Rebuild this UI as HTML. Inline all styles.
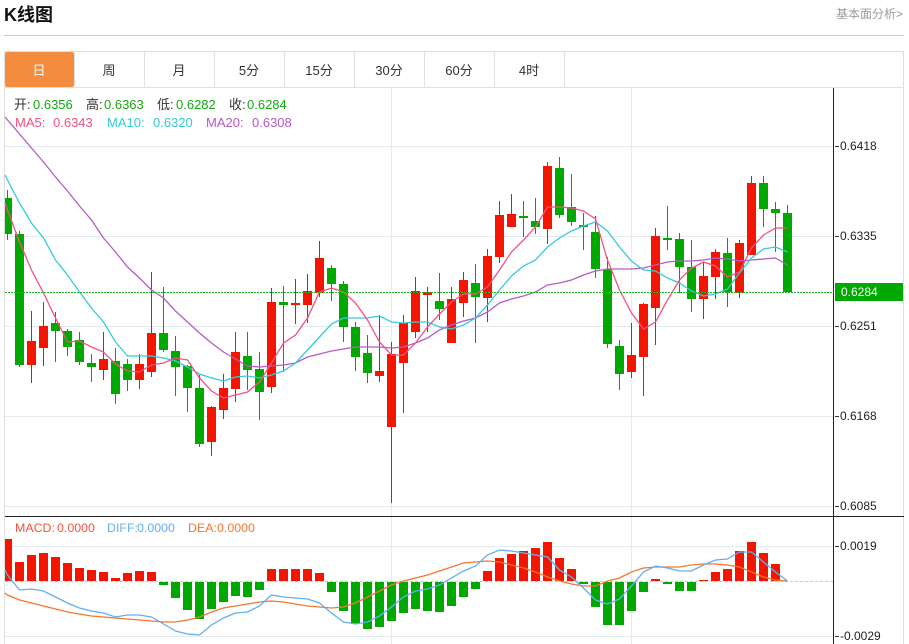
<!DOCTYPE html>
<html><head><meta charset="utf-8"><title>K线图</title>
<style>
html,body{margin:0;padding:0;background:#fff;width:909px;height:644px;overflow:hidden}
svg{display:block;position:absolute;left:0;top:0}
text{font-family:"Liberation Sans","Noto Sans CJK SC",sans-serif}
</style></head><body>
<svg width="909" height="644" viewBox="0 0 909 644" xmlns="http://www.w3.org/2000/svg">
<rect width="909" height="644" fill="#fff"/>
<text x="4" y="21" font-size="18" font-weight="700" fill="#111">K线图</text>
<text x="836" y="18" font-size="12" fill="#9a9a9a">基本面分析&gt;</text>
<path d="M4 35.5H904" stroke="#cccccc" fill="none"/>
<path d="M4.5 644V51.5H903.5V644" stroke="#dedede" fill="none"/>
<path d="M5 87.5H903M74.5 52V87M144.5 52V87M214.5 52V87M284.5 52V87M354.5 52V87M424.5 52V87M494.5 52V87M564.5 52V87" stroke="#e0e0e0" fill="none"/>
<rect x="5" y="52" width="69" height="35" rx="2" fill="#f48c3f"/>
<g font-size="13" fill="#333" text-anchor="middle">
<text x="39" y="75" fill="#fff">日</text><text x="109" y="75">周</text><text x="179" y="75">月</text><text x="249" y="75">5分</text><text x="319" y="75">15分</text><text x="389" y="75">30分</text><text x="459" y="75">60分</text><text x="529" y="75">4时</text>
</g>
<path d="M5 146.5H834M5 236.5H834M5 326.5H834M5 416.5H834M5 506.5H834M5 546.5H834M5 636.5H834M391.5 88V644M631.5 88V644" stroke="#e2ebf2" fill="none"/>
<path d="M5 581.5H834" stroke="#a8d6ea" stroke-dasharray="3 2" fill="none"/>
<!-- candles -->
<path fill="none" stroke="#e8130a" d="M31.5 311V383M43.5 302V366M103.5 332V380M139.5 354V389M151.5 272V377M211.5 406V456M223.5 374V419M235.5 332V402M271.5 288V393M295.5 279V324M307.5 274V323M319.5 241V297M379.5 315V382M391.5 342V503M403.5 315V413M415.5 277V338M427.5 287V332M451.5 287V343M463.5 272V317M487.5 249V322M499.5 201V263M511.5 194V227M547.5 162V244M631.5 323V378M643.5 303V396M655.5 228V345M703.5 262V319M715.5 249V299M739.5 240V298M751.5 176V255"/>
<path fill="#f41500" d="M27 341h9v24h-9zM39 326h9v22h-9zM99 359h9v11h-9zM135 364h9v16h-9zM147 333h9v39h-9zM207 407h9v35h-9zM219 388h9v22h-9zM231 352h9v37h-9zM267 302h9v85h-9zM291 303h9v2h-9zM303 291h9v14h-9zM315 258h9v35h-9zM375 371h9v5h-9zM387 354h9v73h-9zM399 323h9v40h-9zM411 291h9v41h-9zM423 292h9v3h-9zM447 299h9v44h-9zM459 280h9v23h-9zM483 256h9v42h-9zM495 215h9v42h-9zM507 214h9v13h-9zM543 166h9v63h-9zM627 355h9v17h-9zM639 304h9v53h-9zM651 236h9v72h-9zM699 276h9v23h-9zM711 252h9v25h-9zM735 243h9v50h-9zM747 183h9v72h-9z"/>
<path fill="none" stroke="#0d9a0d" d="M7.5 190V240M19.5 231V367M55.5 312V362M67.5 329V356M79.5 332V365M91.5 354V382M115.5 348V404M127.5 359V391M163.5 287V352M175.5 336V396M187.5 365V412M199.5 375V447M247.5 332V390M259.5 352V420M283.5 286V372M331.5 265V301M343.5 281V342M355.5 322V371M367.5 335V383M439.5 273V320M475.5 264V343M523.5 201V237M535.5 198V234M559.5 157V218M571.5 174V226M583.5 213V250M595.5 216V278M607.5 257V348M619.5 340V390M667.5 206V250M679.5 233V293M691.5 240V312M727.5 238V307M763.5 176V227M775.5 202V252M787.5 205V292"/>
<path fill="#02a802" d="M5 198H12V234H5zM15 234h9v131h-9zM51 323h9v8h-9zM63 331h9v16h-9zM75 340h9v22h-9zM87 363h9v4h-9zM111 361h9v33h-9zM123 364h9v16h-9zM159 333h9v17h-9zM171 351h9v16h-9zM183 366h9v22h-9zM195 388h9v56h-9zM243 356h9v14h-9zM255 369h9v23h-9zM279 302h9v3h-9zM327 268h9v16h-9zM339 284h9v43h-9zM351 327h9v30h-9zM363 353h9v20h-9zM435 301h9v8h-9zM471 283h9v14h-9zM519 216h9v2h-9zM531 221h9v6h-9zM555 168h9v47h-9zM567 207h9v15h-9zM579 225h9v2h-9zM591 232h9v37h-9zM603 269h9v75h-9zM615 346h9v28h-9zM663 238h9v2h-9zM675 239h9v28h-9zM687 267h9v32h-9zM723 253h9v39h-9zM759 183h9v26h-9zM771 209h9v4h-9zM783 213h9v79h-9z"/>
<!-- MA lines -->
<polyline fill="none" stroke="#b45cc8" stroke-width="1.3" points="5,117 7.5,120 19.5,134 31.5,148 43.5,162 55.5,177 67.5,191 79.5,206 91.5,220 103.5,238 115.5,252 127.5,267 139.5,278 151.5,290 163.5,298 175.5,311 187.5,322 199.5,333 211.5,343 223.5,352 235.5,359 247.5,366 259.5,367 271.5,366 283.5,365 295.5,363 307.5,357 319.5,354 331.5,351 343.5,349 355.5,347 367.5,347 379.5,347 391.5,348 403.5,347 415.5,343 427.5,338 439.5,330 451.5,325 463.5,321 475.5,318 487.5,312 499.5,303 511.5,299 523.5,296 535.5,292 547.5,285 559.5,283 571.5,280 583.5,275 595.5,271 607.5,269 619.5,269 631.5,269 643.5,268 655.5,265 667.5,262 679.5,261 691.5,261 703.5,260 715.5,258 727.5,259 739.5,261 751.5,260 763.5,259 775.5,258 787.5,265"/>
<polyline fill="none" stroke="#36c9de" stroke-width="1.3" points="5,175 7.5,180 19.5,203 26.7,215 31.5,223 43.5,238 55.5,260 67.5,275 79.5,292 91.5,308 103.5,322 115.5,342 127.5,356 139.5,356 151.5,356 163.5,358 175.5,361 187.5,367 199.5,374 211.5,378 223.5,381 235.5,377 247.5,376 259.5,378 271.5,375 283.5,371 295.5,363 307.5,350 319.5,337 331.5,324 343.5,318 355.5,318 367.5,318 379.5,316 391.5,322 403.5,323 415.5,322 427.5,322 439.5,327 451.5,329 463.5,325 475.5,318 487.5,305 499.5,290 511.5,276 523.5,266 535.5,260 547.5,247 559.5,238 571.5,231 583.5,226 595.5,222 607.5,231 619.5,247 631.5,261 643.5,270 655.5,271 667.5,278 679.5,283 691.5,291 703.5,296 715.5,294 727.5,289 739.5,273 751.5,258 763.5,249 775.5,247 787.5,252"/>
<polyline fill="none" stroke="#f4527f" stroke-width="1.3" points="5,203 7.5,210 19.5,242 31.5,270 43.5,293 55.5,318 67.5,342 79.5,341 91.5,347 103.5,352 115.5,364 127.5,371 139.5,372 151.5,365 163.5,363 175.5,358 187.5,360 199.5,378 211.5,391 223.5,398 235.5,395 247.5,392 259.5,382 271.5,363 283.5,343 295.5,335 307.5,318 319.5,292 331.5,288 343.5,292 355.5,303 367.5,320 379.5,342 391.5,355 403.5,355 415.5,343 427.5,327 439.5,314 451.5,302 463.5,294 475.5,294 487.5,287 499.5,270 511.5,252 523.5,240 535.5,227 547.5,207 559.5,207 571.5,208 583.5,211 595.5,219 607.5,260 619.5,290 631.5,313 643.5,329 655.5,322 667.5,300 679.5,280 691.5,268 703.5,262 715.5,266 727.5,277 739.5,272 751.5,248 763.5,235 775.5,228 787.5,228"/>
<!-- MACD bars -->
<path fill="#f41500" d="M5 539H12V581H5zM15 562h9v19h-9zM27 555h9v26h-9zM39 553h9v28h-9zM51 557h9v24h-9zM63 563h9v18h-9zM75 568h9v13h-9zM87 570h9v11h-9zM99 572h9v9h-9zM111 578h9v3h-9zM123 573h9v8h-9zM135 571h9v10h-9zM147 572h9v9h-9zM267 569h9v12h-9zM279 569h9v12h-9zM291 569h9v12h-9zM303 569h9v12h-9zM315 573h9v8h-9zM483 571h9v10h-9zM495 558h9v23h-9zM507 554h9v27h-9zM519 551h9v30h-9zM531 548h9v33h-9zM543 542h9v39h-9zM555 558h9v23h-9zM567 569h9v12h-9zM651 579h9v2h-9zM699 580h9v1h-9zM711 572h9v9h-9zM723 569h9v12h-9zM735 551h9v30h-9zM747 542h9v39h-9zM759 553h9v28h-9zM771 564h9v17h-9z"/>
<path fill="#02a802" d="M159 582h9v3h-9zM171 582h9v16h-9zM183 582h9v28h-9zM195 582h9v37h-9zM207 582h9v27h-9zM219 582h9v20h-9zM231 582h9v14h-9zM243 582h9v15h-9zM255 582h9v8h-9zM327 582h9v10h-9zM339 582h9v29h-9zM351 582h9v42h-9zM363 582h9v47h-9zM375 582h9v45h-9zM387 582h9v39h-9zM399 582h9v31h-9zM411 582h9v27h-9zM423 582h9v29h-9zM435 582h9v30h-9zM447 582h9v24h-9zM459 582h9v15h-9zM471 582h9v7h-9zM579 582h9v2h-9zM591 582h9v25h-9zM603 582h9v43h-9zM615 582h9v43h-9zM627 582h9v29h-9zM639 582h9v10h-9zM663 582h9v2h-9zM675 582h9v9h-9zM687 582h9v9h-9z"/>
<polyline fill="none" stroke="#f4762f" stroke-width="1.3" points="5,593 7.5,595 19.5,600 31.5,603 43.5,606 55.5,609 67.5,612 79.5,614 91.5,616 103.5,617 115.5,618 127.5,619 139.5,620 151.5,621 163.5,622 175.5,622 187.5,620 199.5,617 211.5,612 223.5,608 235.5,606 247.5,604 259.5,602 271.5,601 283.5,602 295.5,604 307.5,606 319.5,607 331.5,608 343.5,607 355.5,603 367.5,597 379.5,591 391.5,585 403.5,581 415.5,578 427.5,575 439.5,571 451.5,567 463.5,563 475.5,562 487.5,561 499.5,562 511.5,565 523.5,568 535.5,572 547.5,577 559.5,581 571.5,584 583.5,586 595.5,586 607.5,581 619.5,578 631.5,572 643.5,568 655.5,567 667.5,567 679.5,567 691.5,565 703.5,564 715.5,564 727.5,565 739.5,567 751.5,572 763.5,577 775.5,580 787.5,581"/>
<polyline fill="none" stroke="#62aef5" stroke-width="1.3" points="5,570 7.5,575 19.5,590 31.5,589 43.5,591 55.5,597 67.5,603 79.5,608 91.5,611 103.5,613 115.5,617 127.5,615 139.5,615 151.5,617 163.5,624 175.5,631 187.5,634 199.5,635 211.5,625 223.5,618 235.5,613 247.5,612 259.5,606 271.5,595 283.5,597 295.5,598 307.5,599 319.5,603 331.5,613 343.5,622 355.5,624 367.5,622 379.5,616 391.5,607 403.5,597 415.5,591 427.5,589 439.5,585 451.5,578 463.5,571 475.5,566 487.5,555 499.5,550 511.5,551 523.5,553 535.5,555 547.5,557 559.5,570 571.5,577 583.5,588 595.5,600 607.5,604 619.5,599 631.5,586 643.5,572 655.5,566 667.5,568 679.5,571 691.5,571 703.5,565 715.5,560 727.5,559 739.5,552 751.5,552 763.5,562 775.5,572 787.5,581"/>
<!-- axis -->
<path d="M5 516.5H904M833.5 88V644" stroke="#222" fill="none"/>
<path d="M835 146.5H839M835 236.5H839M835 326.5H839M835 416.5H839M835 506.5H839M835 546.5H839M835 636.5H839" stroke="#333" fill="none"/>
<path d="M5 292.5H834" stroke="#1fb51f" stroke-dasharray="2 1" fill="none"/>
<rect x="835" y="283" width="68" height="18" fill="#02a802"/>
<g font-size="12" fill="#222">
<text x="840" y="150">0.6418</text><text x="840" y="240">0.6335</text><text x="841" y="296" fill="#fff">0.6284</text><text x="840" y="330">0.6251</text><text x="840" y="420">0.6168</text><text x="840" y="510">0.6085</text><text x="840" y="550">0.0019</text><text x="840" y="640">-0.0029</text>
</g>
<!-- legends -->
<g font-size="13">
<text x="14" y="109" fill="#333">开:</text><text x="33" y="109" fill="#12a912">0.6356</text>
<text x="86" y="109" fill="#333">高:</text><text x="104" y="109" fill="#12a912">0.6363</text>
<text x="157" y="109" fill="#333">低:</text><text x="176" y="109" fill="#12a912">0.6282</text>
<text x="229" y="109" fill="#333">收:</text><text x="247" y="109" fill="#12a912">0.6284</text>
<text x="15" y="127" fill="#f4527f">MA5:</text><text x="53" y="127" fill="#f4527f">0.6343</text>
<text x="107" y="127" fill="#33c9df">MA10:</text><text x="153" y="127" fill="#33c9df">0.6320</text>
<text x="206" y="127" fill="#b459c7">MA20:</text><text x="252" y="127" fill="#b459c7">0.6308</text>
</g>
<g font-size="12.4">
<text x="15" y="532" fill="#f4523f">MACD:</text><text x="57" y="532" fill="#f4523f">0.0000</text>
<text x="107" y="532" fill="#62aef5">DIFF:</text><text x="137" y="532" fill="#62aef5">0.0000</text>
<text x="188" y="532" fill="#f4762f">DEA:</text><text x="217" y="532" fill="#f4762f">0.0000</text>
</g>
</svg>
</body></html>
